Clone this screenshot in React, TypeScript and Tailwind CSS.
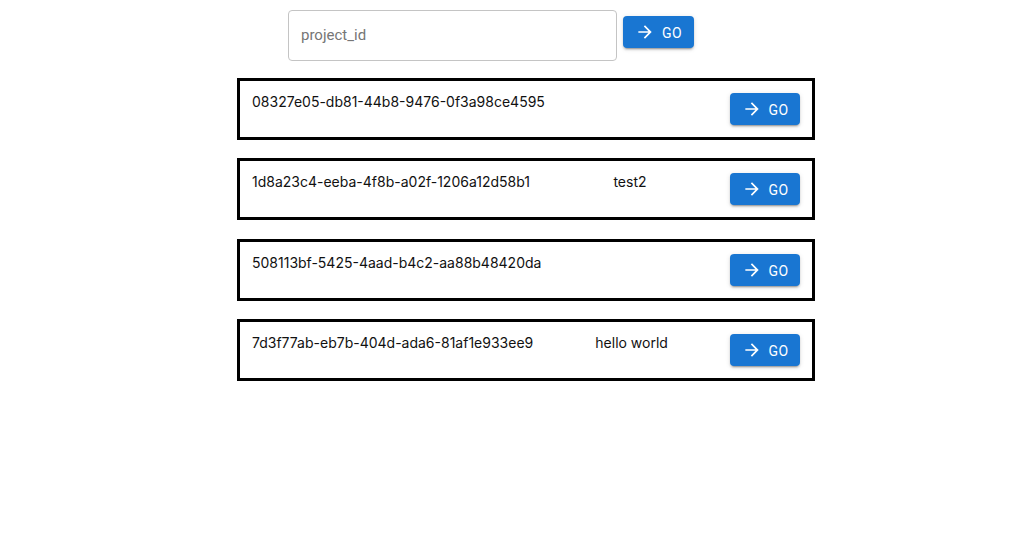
import React from "react";

const rows = [
  { id: "08327e05-db81-44b8-9476-0f3a98ce4595", name: "" },
  { id: "1d8a23c4-eeba-4f8b-a02f-1206a12d58b1", name: "test2" },
  { id: "508113bf-5425-4aad-b4c2-aa88b48420da", name: "" },
  { id: "7d3f77ab-eb7b-404d-ada6-81af1e933ee9", name: "hello world" },
];

function Arrow() {
  return (
    <svg width="20" height="20" viewBox="0 0 24 24" fill="currentColor">
      <path d="M12 4l-1.41 1.41L16.17 11H4v2h12.17l-5.58 5.59L12 20l8-8z" />
    </svg>
  );
}

function GoButton({ wide }: { wide?: boolean }) {
  return (
    <button
      className={
        (wide ? "w-[71px] " : "w-[70px] ") +
        "flex h-8 items-center justify-center gap-[7px] rounded bg-[#1976d2] text-[14px] font-normal tracking-[0.4px] text-white shadow-[0_3px_1px_-2px_rgba(0,0,0,0.2),0_2px_2px_0_rgba(0,0,0,0.14),0_1px_5px_0_rgba(0,0,0,0.12)] [font-family:Roboto,sans-serif]"
      }
    >
      <Arrow />
      <span className="pt-[2px] leading-none">GO</span>
    </button>
  );
}

export default function App() {
  return (
    <div className="min-h-[550px] bg-white pt-[10px] [font-family:Inter,sans-serif]">
      <div className="ml-[288px] flex items-start gap-[6px]">
        <div className="flex h-[51px] w-[329px] items-center rounded border border-[#c4c4c4] px-[12px] text-[15px] text-[#767676] [font-family:Roboto,sans-serif]">
          project_id
        </div>
        <div className="mt-[6px]">
          <GoButton wide />
        </div>
      </div>
      <div className="ml-[237px] mt-[17px] flex w-[578px] flex-col gap-[18.4px]">
        {rows.map((r) => (
          <div
            key={r.id}
            className="flex h-[62px] items-start justify-between border-[3px] border-black p-3 text-[14px] text-[#111]"
          >
            <span className="-mt-px leading-5">{r.id}</span>
            <span className="-mt-px leading-5">{r.name}</span>
            <GoButton />
          </div>
        ))}
      </div>
    </div>
  );
}
